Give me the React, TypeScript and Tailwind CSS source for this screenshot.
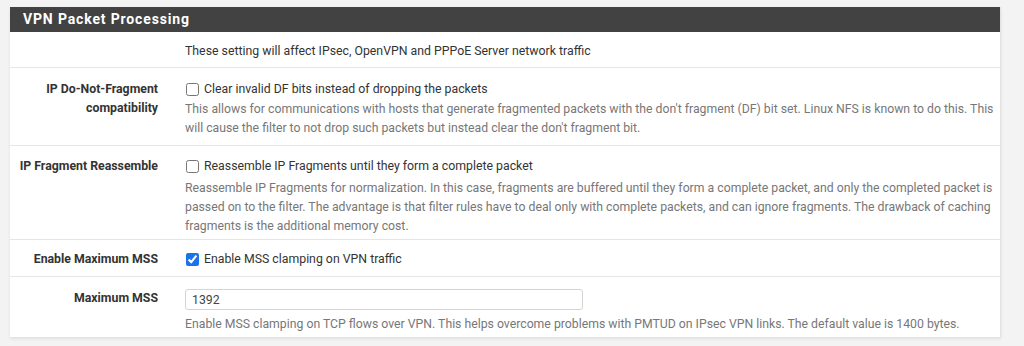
const font = { fontFamily: "Roboto, 'Liberation Sans', sans-serif" };

type RowProps = {
  label?: string;
  children: React.ReactNode;
  className?: string;
};

const Row = ({ label, children, className }: RowProps) => (
  <div className={"flex border-t border-[#e6e6e6] " + (className ?? "")}>
    <div className="w-[175px] shrink-0 pr-[27px] text-right text-[12.3px] font-bold leading-[19px] text-[#333]">
      {label}
    </div>
    <div className="flex-1">{children}</div>
  </div>
);

const Check = ({ text, checked }: { text: string; checked?: boolean }) => (
  <label className="flex items-center text-[12.3px] leading-[19px] text-[#333]">
    <input
      type="checkbox"
      defaultChecked={checked}
      className="ml-[1px] mr-[5px] h-[13px] w-[13px] accent-[#1a73e8]"
    />
    {text}
  </label>
);

const Help = ({ children, className }: { children: React.ReactNode; className?: string }) => (
  <p className={"text-[12.25px] leading-[19px] text-[#777] " + (className ?? "mt-[1px]")}>
    {children}
  </p>
);

export default function App() {
  return (
    <div className="h-[346px] w-[1024px] bg-[#f3f3f3] pt-[7px]" style={font}>
      <div className="ml-[10px] w-[991px] border-r border-[#e2e2e2] bg-white shadow-[0_2px_3px_rgba(0,0,0,0.08)]">
        <div className="h-[25px] bg-[#424242] pl-[13px] text-[14px] font-bold leading-[25px] tracking-[0.85px] text-white">
          VPN Packet Processing
        </div>
        <div className="flex pt-[10px] pb-[6px]">
          <div className="w-[175px] shrink-0" />
          <div className="text-[12.3px] leading-[19px] text-[#333]">
            These setting will affect IPsec, OpenVPN and PPPoE Server network traffic
          </div>
        </div>
        <Row label="IP Do-Not-Fragment compatibility" className="pt-[12px] pb-[7px]">
          <Check text="Clear invalid DF bits instead of dropping the packets" />
          <Help>
            This allows for communications with hosts that generate fragmented packets with the
            don't fragment (DF) bit set. Linux NFS is known to do this. This will cause the filter
            to not drop such packets but instead clear the don't fragment bit.
          </Help>
        </Row>
        <Row label="IP Fragment Reassemble" className="pt-[11px] pb-[3px]">
          <Check text="Reassemble IP Fragments until they form a complete packet" />
          <Help className="mt-[3px]">
            Reassemble IP Fragments for normalization. In this case, fragments are buffered until
            they form a complete packet, and only the completed packet is passed on to the filter.
            The advantage is that filter rules have to deal only with complete packets, and can
            ignore fragments. The drawback of caching fragments is the additional memory cost.
          </Help>
        </Row>
        <Row label="Enable Maximum MSS" className="pt-[10px] pb-[7px]">
          <Check text="Enable MSS clamping on VPN traffic" checked />
        </Row>
        <Row label="Maximum MSS" className="pt-[12px] pb-[3px]">
          <input
            type="text"
            defaultValue="1392"
            className="block h-[21px] w-[398px] rounded-[3px] border border-[#d4d4d4] px-[6px] text-[12.3px] text-[#444] outline-none"
          />
          <Help className="mt-[5px]">
            Enable MSS clamping on TCP flows over VPN. This helps overcome problems with PMTUD on
            IPsec VPN links. The default value is 1400 bytes.
          </Help>
        </Row>
      </div>
    </div>
  );
}
